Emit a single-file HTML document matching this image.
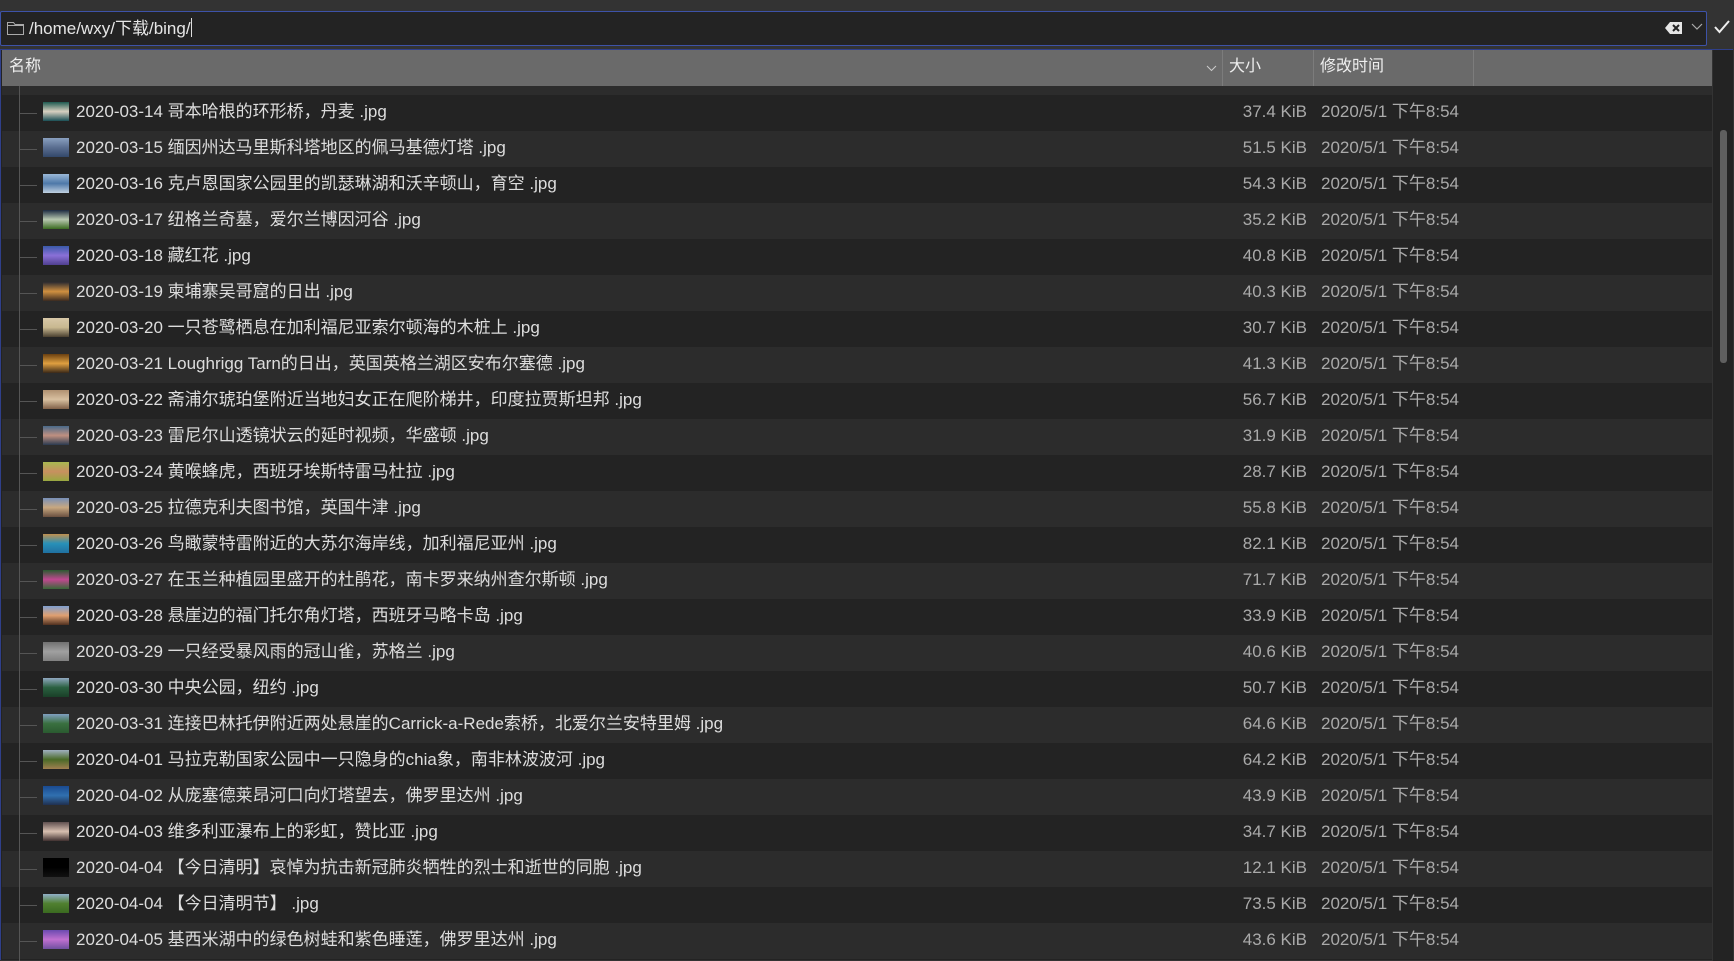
<!DOCTYPE html>
<html><head><meta charset="utf-8"><style>
*{margin:0;padding:0;box-sizing:border-box}
body{width:1734px;height:960px;background:#333;overflow:hidden;font-family:"Liberation Sans","Noto Sans CJK SC",sans-serif;position:relative;color:#ddd}
.inp{position:absolute;left:0;top:11px;width:1707px;height:35px;background:#232323;border:1px solid #3d52a8;border-radius:2px}
.path{position:absolute;left:28px;top:0;line-height:33px;height:33px;font-size:17px;color:#e6e6e6}
.cur{display:inline-block;width:1px;height:19px;background:#ddd;vertical-align:-3px}
.panel{position:absolute;left:0;top:49px;width:1733px;height:911px;background:#232323;border:1px solid #2f3f8a;border-bottom:none}
.hdr{position:absolute;left:1px;top:0;width:1710px;height:36px;background:#6a6a6a;font-size:16px;color:#eee}
.hdr span{position:absolute;top:0;line-height:34px}
.sep{position:absolute;top:0;width:1px;height:36px;background:#7c7c7c}
.rows{position:absolute;left:1px;top:36px;width:1710px;height:875px;overflow:hidden}
.row{position:absolute;left:0;width:1710px;height:36px;font-size:17px;line-height:36px}
.row.l{background:#2c2c2c}.row.d{background:#232323}
.tl{position:absolute;left:17px;top:18px;width:18px;height:1px;background:#555}
.th{position:absolute;left:41px;top:7px;width:26px;height:19px}
.nm{position:absolute;left:74px;top:-1px;white-space:nowrap}
.sz{position:absolute;right:405px;top:-1px;color:#aaa}
.tm{position:absolute;left:1319px;top:-1px;color:#aaa}
.vl{position:absolute;left:17px;top:36px;width:1px;height:875px;background:#555}
.sb{position:absolute;left:1711px;top:0;width:21px;height:911px;background:#232323;border-left:1px solid #333}
.thumb{position:absolute;left:7px;top:80px;width:7px;height:233px;background:#5f5f5f;border-radius:3px}
</style></head><body>
<div class="inp">
<svg style="position:absolute;left:6px;top:10px" width="17" height="13" viewBox="0 0 17 13"><path d="M0.5 0.5h6l1.5 2h8.5v10h-16z M0.5 3.5h16" fill="none" stroke="#aaa"/></svg>
<div class="path">/home/wxy/下载/bing/<span class="cur"></span></div>
<svg style="position:absolute;left:1664px;top:9px" width="18" height="14" viewBox="0 0 18 14"><path d="M5 1h12v12H5L0 7z" fill="#e6e6e6"/><path d="M8 4l6 6M14 4l-6 6" stroke="#232323" stroke-width="2"/></svg>
<svg style="position:absolute;left:1690px;top:11px" width="12" height="8" viewBox="0 0 12 8"><path d="M1 1l5 5 5-5" fill="none" stroke="#aaa" stroke-width="1.2"/></svg>
</div>
<svg style="position:absolute;left:1714px;top:20px" width="16" height="14" viewBox="0 0 16 14"><path d="M1 7l4.5 5L15 1" fill="none" stroke="#eee" stroke-width="2"/></svg>
<div class="panel">
<div class="hdr"><span style="left:7px">名称</span>
<svg style="position:absolute;left:1204px;top:15px" width="11" height="7" viewBox="0 0 11 7"><path d="M1 1l4.5 4.5L10 1" fill="none" stroke="#ccc"/></svg>
<div class="sep" style="left:1220px"></div><span style="left:1227px">大小</span>
<div class="sep" style="left:1311px"></div><span style="left:1318px">修改时间</span>
<div class="sep" style="left:1471px"></div></div>
<div class="rows" id="rows"></div>
<div class="sb"><div class="thumb"></div></div>
</div>
<script>
const d=[
["2020-03-14 哥本哈根的环形桥，丹麦 .jpg","37.4","#1e5a50,#d8d0c0,#1a4f55"],
["2020-03-15 缅因州达马里斯科塔地区的佩马基德灯塔 .jpg","51.5","#8aa0c0,#5a6e90,#33486a"],
["2020-03-16 克卢恩国家公园里的凯瑟琳湖和沃辛顿山，育空 .jpg","54.3","#9ab8d8,#4e78a8,#c0d0e0"],
["2020-03-17 纽格兰奇墓，爱尔兰博因河谷 .jpg","35.2","#1c2a40,#b8c8b0,#3a6a20"],
["2020-03-18 藏红花 .jpg","40.8","#3a5aa8,#8a70d8,#504090"],
["2020-03-19 柬埔寨吴哥窟的日出 .jpg","40.3","#2a2a30,#d09040,#3a2a20"],
["2020-03-20 一只苍鹭栖息在加利福尼亚索尔顿海的木桩上 .jpg","30.7","#d8c8a8,#c8b890,#4a4030"],
["2020-03-21 Loughrigg Tarn的日出，英国英格兰湖区安布尔塞德 .jpg","41.3","#6a4010,#e0a040,#3a2818"],
["2020-03-22 斋浦尔琥珀堡附近当地妇女正在爬阶梯井，印度拉贾斯坦邦 .jpg","56.7","#b09070,#d8c0a0,#806048"],
["2020-03-23 雷尼尔山透镜状云的延时视频，华盛顿 .jpg","31.9","#4a6a8a,#c09080,#2a3a50"],
["2020-03-24 黄喉蜂虎，西班牙埃斯特雷马杜拉 .jpg","28.7","#a8b850,#c89060,#98a840"],
["2020-03-25 拉德克利夫图书馆，英国牛津 .jpg","55.8","#7890b8,#c8a880,#6a5040"],
["2020-03-26 鸟瞰蒙特雷附近的大苏尔海岸线，加利福尼亚州 .jpg","82.1","#c09050,#2890b8,#2070a0"],
["2020-03-27 在玉兰种植园里盛开的杜鹃花，南卡罗来纳州查尔斯顿 .jpg","71.7","#2a5a30,#c04890,#386838"],
["2020-03-28 悬崖边的福门托尔角灯塔，西班牙马略卡岛 .jpg","33.9","#80a0d0,#e0a070,#503020"],
["2020-03-29 一只经受暴风雨的冠山雀，苏格兰 .jpg","40.6","#707070,#a0a0a0,#808080"],
["2020-03-30 中央公园，纽约 .jpg","50.7","#90a8c0,#2a6040,#1a4028"],
["2020-03-31 连接巴林托伊附近两处悬崖的Carrick-a-Rede索桥，北爱尔兰安特里姆 .jpg","64.6","#80a0c0,#3a7040,#2a5a30"],
["2020-04-01 马拉克勒国家公园中一只隐身的chia象，南非林波波河 .jpg","64.2","#a0b0c0,#4a6a28,#a08050"],
["2020-04-02 从庞塞德莱昂河口向灯塔望去，佛罗里达州 .jpg","43.9","#1a4a90,#3070b0,#203050"],
["2020-04-03 维多利亚瀑布上的彩虹，赞比亚 .jpg","34.7","#605050,#d8c0b0,#403030"],
["2020-04-04 【今日清明】哀悼为抗击新冠肺炎牺牲的烈士和逝世的同胞 .jpg","12.1","#000,#000,#111"],
["2020-04-04 【今日清明节】 .jpg","73.5","#90b0c8,#508030,#3a6a20"],
["2020-04-05 基西米湖中的绿色树蛙和紫色睡莲，佛罗里达州 .jpg","43.6","#6a4ab0,#c070d0,#7050a0"]];
let h='<div class="row l" style="top:-27px"><div class="tl"></div></div>';
d.forEach((r,i)=>{h+=`<div class="row ${i%2?'l':'d'}" style="top:${9+i*36}px"><div class="tl"></div><div class="th" style="background:linear-gradient(180deg,${r[2]})"></div><div class="nm">${r[0]}</div><div class="sz">${r[1]} KiB</div><div class="tm">2020/5/1 下午8:54</div></div>`});
h+='<div class="vl" style="top:0;height:875px"></div>';
document.getElementById('rows').innerHTML=h;
</script>
</body></html>
